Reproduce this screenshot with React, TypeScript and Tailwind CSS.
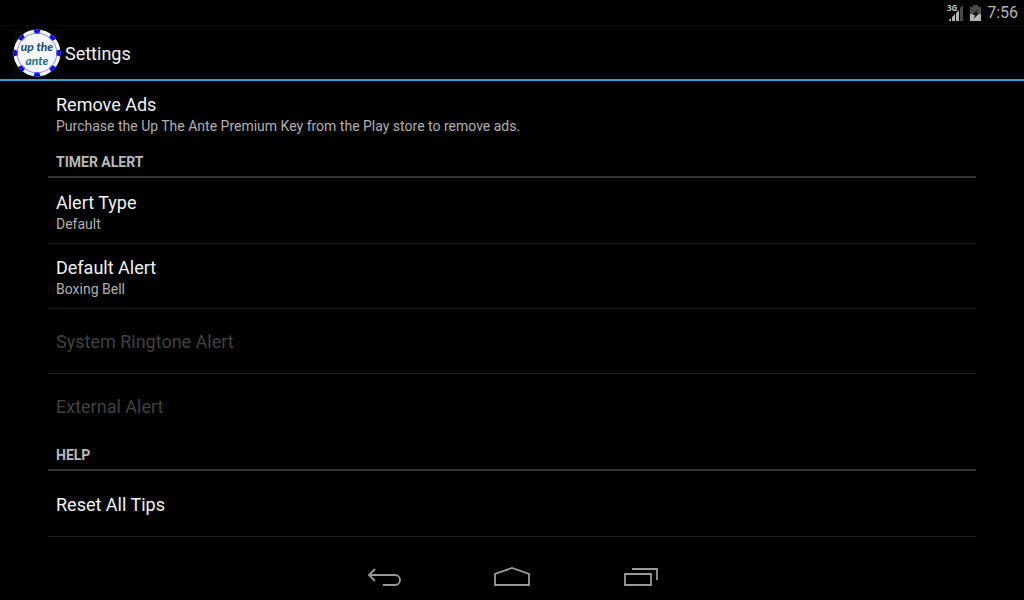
import React from "react";
import { clsx } from "clsx";

interface Preference {
  title: string;
  summary?: string;
  disabled?: boolean;
}

interface PreferenceGroup {
  title?: string;
  items: Preference[];
}

const GROUPS: PreferenceGroup[] = [
  {
    items: [
      {
        title: "Remove Ads",
        summary: "Purchase the Up The Ante Premium Key from the Play store to remove ads.",
      },
    ],
  },
  {
    title: "TIMER ALERT",
    items: [
      { title: "Alert Type", summary: "Default" },
      { title: "Default Alert", summary: "Boxing Bell" },
      { title: "System Ringtone Alert", disabled: true },
      { title: "External Alert", disabled: true },
    ],
  },
  {
    title: "HELP",
    items: [{ title: "Reset All Tips" }],
  },
];

const CHIP_ANGLES = [0, 45, 90, 135, 180, 225, 270, 315];

const ChipLogo: React.FC = () => (
  <svg width="48" height="48" viewBox="0 0 48 48" aria-label="Up the Ante" role="img">
    <rect width="48" height="48" fill="#070704" />
    <circle cx="24" cy="24" r="23.5" fill="#f6f7fa" />
    {CHIP_ANGLES.map(angle => (
      <path key={angle} d="M20.6 .8 Q24 .1 27.4 .8 L26.2 4.8 H21.8 Z" fill="#0a0af5" transform={`rotate(${angle} 24 24)`} />
    ))}
    <circle cx="24" cy="24" r="19.8" fill="none" stroke="#6a74f0" strokeWidth="0.8" />
    <g fontFamily="Lato, sans-serif" fontStyle="italic" fontWeight="700" fontSize="12" textAnchor="middle">
      <text x="24" y="22" fill="#17426f">up the</text>
      <text x="24" y="36" fill="#147080">ante</text>
    </g>
  </svg>
);

const StatusBar: React.FC = () => (
  <div className="flex h-[25px] items-center justify-end pr-[6px] text-[#b4b4b4]">
    <svg width="18" height="20" viewBox="0 0 18 20" className="mr-[5px]" aria-label="3G signal" role="img">
      <path d="M2 18 V17 L4 15 V18 Z M5 18 V14 L8 11 V18 Z M9 18 V10 L12 7 V18 Z" fill="#b4b4b4" />
      <path d="M13 18 V5 L16 2 V18 Z" fill="#484848" />
      <text x="0" y="8" fontFamily="'Open Sans', sans-serif" fontWeight="700" fontSize="8" fill="#c4c4c4">3G</text>
    </svg>
    <svg width="11" height="16" viewBox="0 0 11 16" className="mr-[6px]" aria-label="Battery charging" role="img">
      <path d="M3 0 H8 V2 H11 V9 H0 V2 H3 Z" fill="#4a4a4a" />
      <path d="M0 9 H11 V16 H0 Z" fill="#b4b4b4" />
      <path d="M8 4 L2.5 9.5 L5 10.5 L3.5 14 L9 8.5 L6.5 7.5 Z" fill="#151515" />
    </svg>
    <span className="text-[16px] leading-6">7:56</span>
  </div>
);

const PreferenceRow: React.FC<{ item: Preference }> = ({ item }) => (
  <button
    type="button"
    disabled={item.disabled}
    className="flex min-h-16 w-full flex-col justify-center px-2 pt-[2px] text-left"
  >
    <span className={clsx("text-[18px] leading-6", item.disabled ? "text-[#404040]" : "text-[#f3f3f3]")}>
      {item.title}
    </span>
    {item.summary && <span className="text-[14px] leading-[18px] text-[#b0b0b0]">{item.summary}</span>}
  </button>
);

const NavigationBar: React.FC = () => (
  <nav className="flex h-12 items-center justify-center pt-1" aria-label="System">
    <button type="button" aria-label="Back" className="flex h-11 w-32 items-center justify-center">
      <svg width="36" height="24" viewBox="0 0 36 24" fill="none" stroke="#999999" strokeWidth="1.8">
        <path d="M9 3 L3 9 L9 15 M3 9 H29 A5 5 0 0 1 29 19 H17" />
      </svg>
    </button>
    <button type="button" aria-label="Home" className="flex h-11 w-32 items-center justify-center">
      <svg width="36" height="24" viewBox="0 0 36 24" fill="none" stroke="#999999" strokeWidth="1.8">
        <path d="M1 19 V8 L18 2 L35 8 V19 Z" />
      </svg>
    </button>
    <button type="button" aria-label="Recent apps" className="flex h-11 w-32 items-center justify-center">
      <svg width="36" height="24" viewBox="0 0 36 24" fill="none" stroke="#999999" strokeWidth="1.8">
        <path d="M3 8 H29 V19 H3 Z M10 3 H35 V14" />
      </svg>
    </button>
  </nav>
);

const App: React.FC = () => (
  <div className="flex min-h-screen flex-col bg-black font-['Roboto',sans-serif]">
    <StatusBar />

    <header className="flex h-14 items-center gap-1 border-t border-b-2 border-t-[#0b0b0b] border-b-[#33a5d4] pl-[13px]">
      <ChipLogo />
      <h1 className="pt-[2px] text-[18px] leading-6 text-[#f3f3f3]">Settings</h1>
    </header>

    <main className="flex-1 px-12">
      {GROUPS.map((group, index) => (
        <section key={group.title ?? index}>
          {group.title && (
            <h2 className="mb-px flex h-[33px] items-center border-b-2 border-[#333333] px-2 pt-[2px] text-[14px] leading-5 font-bold text-[#b8b8b8]">
              {group.title}
            </h2>
          )}
          <ul
            className={clsx(
              "divide-y divide-[#1f1f1f]",
              index === GROUPS.length - 1 && "border-b border-[#1f1f1f]"
            )}
          >
            {group.items.map(item => (
              <li key={item.title}>
                <PreferenceRow item={item} />
              </li>
            ))}
          </ul>
        </section>
      ))}
    </main>

    <NavigationBar />
  </div>
);

export default App;
